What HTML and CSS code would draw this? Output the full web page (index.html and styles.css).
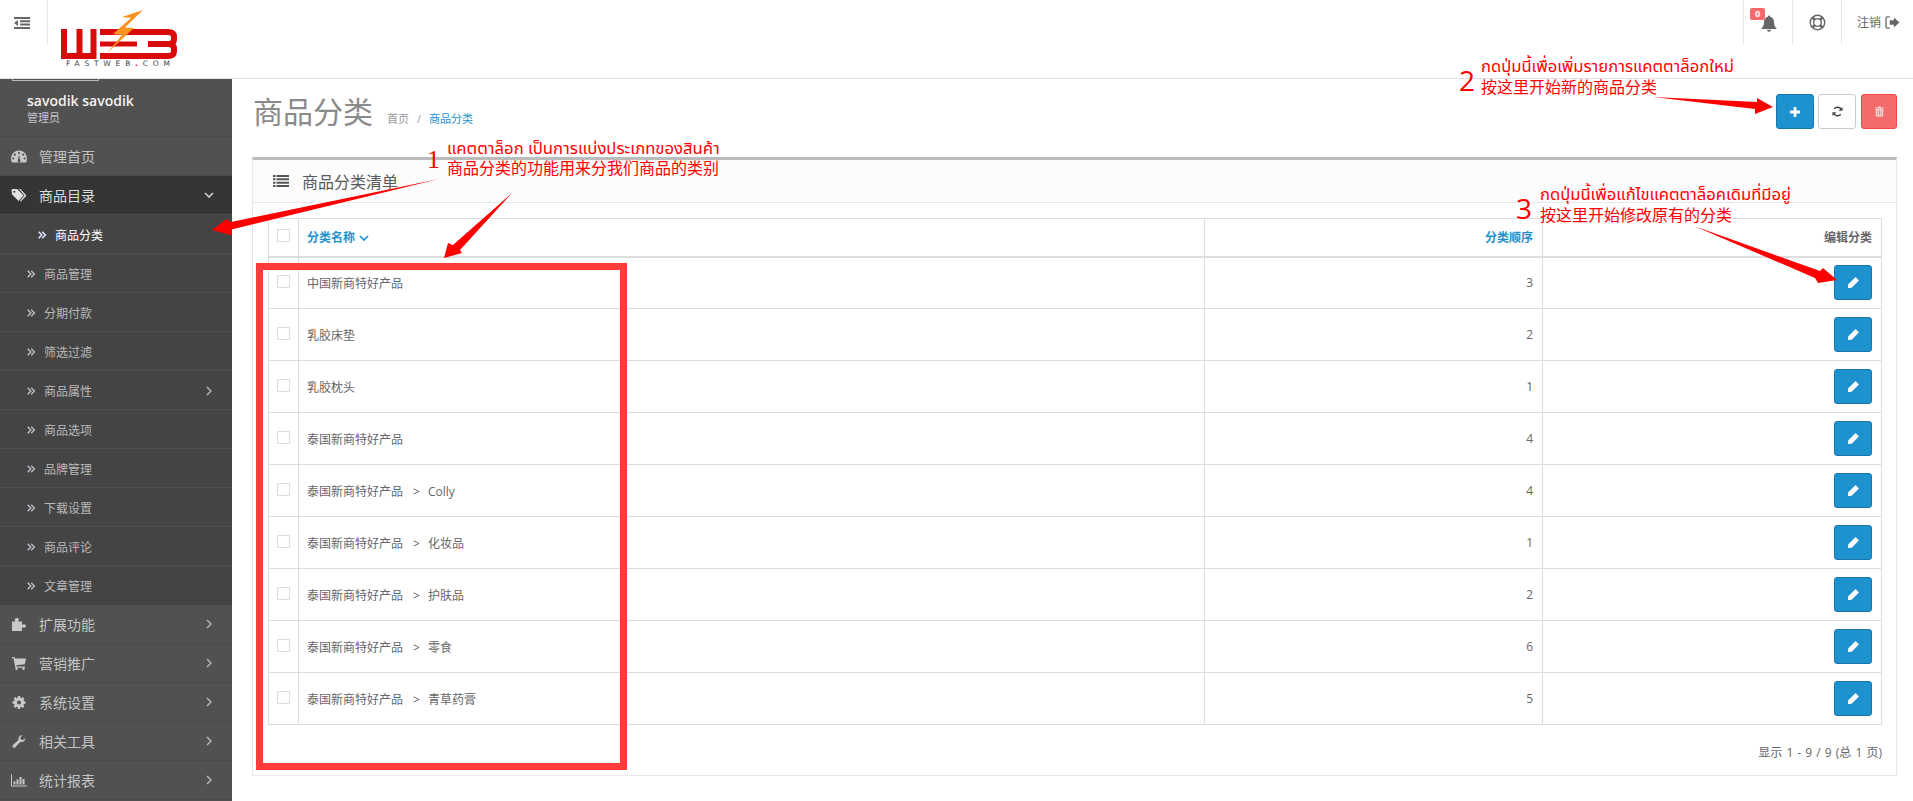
FILE: index.html
```html
<!DOCTYPE html>
<html lang="zh">
<head>
<meta charset="utf-8">
<title>商品分类</title>
<link rel="stylesheet" href="styles.css">
</head>
<body>
<svg class="defs" xmlns="http://www.w3.org/2000/svg">
  <symbol id="i-indent" viewBox="0 0 16 12"><path d="M0 0h16v2H0zM6 3.3h10v2H6zM6 6.6h10v2H6zM0 10h16v2H0zM0 6l4-3v6z"/></symbol>
  <symbol id="i-bell" viewBox="0 0 16 16"><path d="M8 0a1.2 1.2 0 0 1 1.2 1.3C11.8 1.9 13 4 13 6.500c0 3.500 1 4.700 2.500 6.300v.7H.5v-.7C2 11.200 3 10 3 6.500 3 4 4.200 1.900 6.800 1.300A1.200 1.200 0 0 1 8 0zM6 14.200h4a2 2 0 0 1-4 0z"/></symbol>
  <symbol id="i-ring" viewBox="0 0 16 16"><circle cx="8" cy="8" r="6.800" fill="none" stroke="currentColor" stroke-width="1.300"/><circle cx="8" cy="8" r="3.600" fill="none" stroke="currentColor" stroke-width="1.300"/><path d="M3 3l2.800 2.800M13 3l-2.800 2.800M3 13l2.800-2.800M13 13l-2.800-2.800" stroke="currentColor" stroke-width="2.400"/></symbol>
  <symbol id="i-out" viewBox="0 0 16 14"><path d="M5 1H2.500A1.500 1.500 0 0 0 1 2.500v9A1.500 1.500 0 0 0 2.500 13H5" fill="none" stroke="currentColor" stroke-width="1.400"/><path d="M9.500 1.500L15.500 7l-6 5.500V9.500H5v-5h4.500z"/></symbol>
  <symbol id="i-dash" viewBox="0 0 16 12"><path d="M8 0a8 8 0 0 1 8 8c0 1.500-.4 2.900-1 4H1C.4 10.900 0 9.500 0 8a8 8 0 0 1 8-8z"/><g fill="#515151"><circle cx="8" cy="2.500" r="1.100"/><circle cx="3.800" cy="4.200" r="1.100"/><circle cx="12.200" cy="4.200" r="1.100"/><circle cx="2.300" cy="8" r="1.100"/><circle cx="13.700" cy="8" r="1.100"/><path d="M7.100 9.500l1-5.500 1 5.500a1.400 1.400 0 1 1-2 0z"/></g></symbol>
  <symbol id="i-tag" viewBox="0 0 16 14"><path d="M0 1.500A1.500 1.500 0 0 1 1.500 0H6l7 7-5.500 6L.5 6z"/><circle cx="3" cy="3" r="1.100" fill="#353535"/><path d="M8 0h1.500l6 6.500a1 1 0 0 1 0 1.300L10 13.500 9 12.800 14 7z"/></symbol>
  <symbol id="i-dbl" viewBox="0 0 9 8"><path d="M.7.7L3.800 4 .7 7.300M4.200.7L7.400 4 4.200 7.300" fill="none" stroke="currentColor" stroke-width="1.500"/></symbol>
  <symbol id="i-right" viewBox="0 0 6 10"><path d="M1 1l4 4-4 4" fill="none" stroke="currentColor" stroke-width="1.500"/></symbol>
  <symbol id="i-down" viewBox="0 0 10 6"><path d="M1 1l4 4 4-4" fill="none" stroke="currentColor" stroke-width="1.700"/></symbol>
  <symbol id="i-puzzle" viewBox="0 0 14 13"><path d="M0 3.500h3.500C3 2.500 2.800 2 2.800 1.500 2.800.5 3.800 0 4.800 0s2 .5 2 1.500c0 .5-.2 1-.7 2H10V7c1-.5 1.500-.7 2-.7 1 0 2 .7 2 1.700s-1 1.700-2 1.700c-.5 0-1-.2-2-.7V13H0z"/></symbol>
  <symbol id="i-cart" viewBox="0 0 14 13"><path d="M0 0h2.500l.4 1.500H14l-1.200 5.800-8.500 1 .3 1.200h8.400v1.200H3.300L1.500 1.200H0z"/><circle cx="4.500" cy="11.800" r="1.200"/><circle cx="11.500" cy="11.800" r="1.200"/></symbol>
  <symbol id="i-cog" viewBox="0 0 14 14"><path fill-rule="evenodd" d="M5.800 0h2.400l.3 1.900 1 .4L11.100 1.200l1.700 1.700-1.100 1.600.4 1 1.900.3v2.400l-1.900.3-.4 1 1.100 1.600-1.700 1.700-1.600-1.100-1 .4-.3 1.900H5.800l-.3-1.900-1-.4-1.600 1.100-1.700-1.700 1.100-1.600-.4-1L0 8.200V5.800l1.900-.3.4-1-1.100-1.600 1.700-1.700 1.600 1.100 1-.4zM7 4.800a2.200 2.200 0 1 0 0 4.400 2.200 2.200 0 0 0 0-4.400z"/></symbol>
  <symbol id="i-wrench" viewBox="0 0 14 14"><path d="M13.800 3.200A4 4 0 0 1 8.500 7.300L3 13.300a1.800 1.800 0 0 1-2.500 0 1.800 1.800 0 0 1 0-2.500L6.500 5.300A4 4 0 0 1 10.800.2L8.400 2.600l.6 2.200 2.200.7z"/></symbol>
  <symbol id="i-chart" viewBox="0 0 16 12"><path d="M0 0h1v11h15v1H0zM2.500 7h2v3h-2zM5.500 5h2v5h-2zM8.500 2.500h2V10h-2zM11.500 4.500h2V10h-2z"/></symbol>
  <symbol id="i-list" viewBox="0 0 16 12"><path d="M0 0h2.500v2H0zM3.500 0H16v2H3.500zM0 3.300h2.500v2H0zM3.500 3.300H16v2H3.500zM0 6.700h2.500v2H0zM3.500 6.700H16v2H3.500zM0 10h2.500v2H0zM3.500 10H16v2H3.500z"/></symbol>
  <symbol id="i-plus" viewBox="0 0 10 10"><path d="M3.600 0h2.800v3.600H10v2.800H6.400V10H3.600V6.400H0V3.600h3.600z"/></symbol>
  <symbol id="i-refresh" viewBox="0 0 12 12"><path d="M10.300 4.500A4.600 4.600 0 0 0 2.400 3" fill="none" stroke="currentColor" stroke-width="1.700"/><path d="M11.500 1v4.300H7.200z"/><path d="M1.700 7.500A4.600 4.600 0 0 0 9.600 9" fill="none" stroke="currentColor" stroke-width="1.700"/><path d="M.5 11V6.700h4.300z"/></symbol>
  <symbol id="i-trash" viewBox="0 0 11 12"><path fill-rule="evenodd" d="M3.500 1L4 0h3l.5 1H11v1.200H0V1zM1 3h9v8a1 1 0 0 1-1 1H2a1 1 0 0 1-1-1zM3 4.200v6.300h.9V4.200zM5 4.200v6.300h.9V4.200zM7.100 4.200v6.300H8V4.200z"/></symbol>
  <symbol id="i-pencil" viewBox="0 0 12 12"><path d="M8.800.6l2.600 2.600a.8.800 0 0 1 0 1.100L4 11.700 0 12l.3-4L7.700.6a.8.800 0 0 1 1.100 0z"/></symbol>
</svg>

<div class="page">
  <header class="topbar">
    <div class="toggle"><svg class="ico ico-indent"><use href="#i-indent"/></svg></div>
    <div class="brand">
      <svg class="logo" viewBox="0 0 120 64" xmlns="http://www.w3.org/2000/svg">
        <g fill="none" stroke="#d80a0a" stroke-width="6">
          <path d="M4 24v27h29.500V24M19.500 24v25"/>
          <path d="M40 27h37M40 51h37"/>
          <path d="M40 39h37" stroke-width="5"/>
          <path d="M77 27h31q6 0 6 5v2q0 5-6 5H88h20q6 0 6 5v2q0 5-6 5H77"/>
        </g>
        <path d="M83 5L62 12l9 1L53 29l9 1L47 48 74 23l-9-.5z" fill="#f7931e"/>
        <text class="logo-text" x="6" y="61" textLength="104">FASTWEB<tspan class="logo-dot">.</tspan>COM</text>
      </svg>
    </div>
    <nav class="top-actions">
      <a class="top-act"><span class="badge">0</span><svg class="ico ico-bell"><use href="#i-bell"/></svg></a>
      <a class="top-act"><svg class="ico ico-ring"><use href="#i-ring"/></svg></a>
      <a class="top-act top-out">注销 <svg class="ico ico-out"><use href="#i-out"/></svg></a>
    </nav>
  </header>

  <div class="layout">
    <aside class="sidebar">
      <div class="profile">
        <div class="avatar-edge"></div>
        <div class="user-name">savodik savodik</div>
        <div class="user-role">管理员</div>
      </div>
      <ul class="menu">
        <li class="item"><svg class="ico m-ico"><use href="#i-dash"/></svg><span>管理首页</span></li>
        <li class="item item-open"><svg class="ico m-ico m-ico-tag"><use href="#i-tag"/></svg><span>商品目录</span><svg class="ico caret-down"><use href="#i-down"/></svg></li>
        <li class="sub sub-active"><svg class="ico dbl"><use href="#i-dbl"/></svg><span>商品分类</span></li>
        <li class="sub"><svg class="ico dbl"><use href="#i-dbl"/></svg><span>商品管理</span></li>
        <li class="sub"><svg class="ico dbl"><use href="#i-dbl"/></svg><span>分期付款</span></li>
        <li class="sub"><svg class="ico dbl"><use href="#i-dbl"/></svg><span>筛选过滤</span></li>
        <li class="sub"><svg class="ico dbl"><use href="#i-dbl"/></svg><span>商品属性</span><svg class="ico caret"><use href="#i-right"/></svg></li>
        <li class="sub"><svg class="ico dbl"><use href="#i-dbl"/></svg><span>商品选项</span></li>
        <li class="sub"><svg class="ico dbl"><use href="#i-dbl"/></svg><span>品牌管理</span></li>
        <li class="sub"><svg class="ico dbl"><use href="#i-dbl"/></svg><span>下载设置</span></li>
        <li class="sub"><svg class="ico dbl"><use href="#i-dbl"/></svg><span>商品评论</span></li>
        <li class="sub"><svg class="ico dbl"><use href="#i-dbl"/></svg><span>文章管理</span></li>
        <li class="item"><svg class="ico m-ico"><use href="#i-puzzle"/></svg><span>扩展功能</span><svg class="ico caret"><use href="#i-right"/></svg></li>
        <li class="item"><svg class="ico m-ico"><use href="#i-cart"/></svg><span>营销推广</span><svg class="ico caret"><use href="#i-right"/></svg></li>
        <li class="item"><svg class="ico m-ico"><use href="#i-cog"/></svg><span>系统设置</span><svg class="ico caret"><use href="#i-right"/></svg></li>
        <li class="item"><svg class="ico m-ico"><use href="#i-wrench"/></svg><span>相关工具</span><svg class="ico caret"><use href="#i-right"/></svg></li>
        <li class="item"><svg class="ico m-ico"><use href="#i-chart"/></svg><span>统计报表</span><svg class="ico caret"><use href="#i-right"/></svg></li>
      </ul>
    </aside>

    <main class="content">
      <div class="page-head">
        <div class="title-wrap">
          <h1 class="title">商品分类</h1>
          <div class="crumbs"><span class="crumb-home">首页</span><span class="crumb-sep">/</span><span class="crumb-here">商品分类</span></div>
        </div>
        <div class="head-btns">
          <button class="btn btn-primary btn-add"><svg class="ico ico-plus"><use href="#i-plus"/></svg></button>
          <button class="btn btn-default"><svg class="ico ico-refresh"><use href="#i-refresh"/></svg></button>
          <button class="btn btn-danger"><svg class="ico ico-trash"><use href="#i-trash"/></svg></button>
        </div>
      </div>

      <section class="panel">
        <div class="panel-head"><svg class="ico ico-list"><use href="#i-list"/></svg><span>商品分类清单</span></div>
        <div class="panel-body">
          <table class="grid">
            <colgroup><col class="c-check"><col class="c-name"><col class="c-order"><col class="c-edit"></colgroup>
            <thead>
              <tr>
                <th><span class="check"></span></th>
                <th class="th-link">分类名称 <svg class="ico ico-sort"><use href="#i-down"/></svg></th>
                <th class="num th-link">分类顺序</th>
                <th class="num">编辑分类</th>
              </tr>
            </thead>
            <tbody>
              <tr><td><span class="check"></span></td><td>中国新商特好产品</td><td class="num">3</td><td class="num"><button class="btn-edit"><svg class="ico ico-pencil"><use href="#i-pencil"/></svg></button></td></tr>
              <tr><td><span class="check"></span></td><td>乳胶床垫</td><td class="num">2</td><td class="num"><button class="btn-edit"><svg class="ico ico-pencil"><use href="#i-pencil"/></svg></button></td></tr>
              <tr><td><span class="check"></span></td><td>乳胶枕头</td><td class="num">1</td><td class="num"><button class="btn-edit"><svg class="ico ico-pencil"><use href="#i-pencil"/></svg></button></td></tr>
              <tr><td><span class="check"></span></td><td>泰国新商特好产品</td><td class="num">4</td><td class="num"><button class="btn-edit"><svg class="ico ico-pencil"><use href="#i-pencil"/></svg></button></td></tr>
              <tr><td><span class="check"></span></td><td>泰国新商特好产品<span class="sep">&gt;</span>Colly</td><td class="num">4</td><td class="num"><button class="btn-edit"><svg class="ico ico-pencil"><use href="#i-pencil"/></svg></button></td></tr>
              <tr><td><span class="check"></span></td><td>泰国新商特好产品<span class="sep">&gt;</span>化妆品</td><td class="num">1</td><td class="num"><button class="btn-edit"><svg class="ico ico-pencil"><use href="#i-pencil"/></svg></button></td></tr>
              <tr><td><span class="check"></span></td><td>泰国新商特好产品<span class="sep">&gt;</span>护肤品</td><td class="num">2</td><td class="num"><button class="btn-edit"><svg class="ico ico-pencil"><use href="#i-pencil"/></svg></button></td></tr>
              <tr><td><span class="check"></span></td><td>泰国新商特好产品<span class="sep">&gt;</span>零食</td><td class="num">6</td><td class="num"><button class="btn-edit"><svg class="ico ico-pencil"><use href="#i-pencil"/></svg></button></td></tr>
              <tr><td><span class="check"></span></td><td>泰国新商特好产品<span class="sep">&gt;</span>青草药膏</td><td class="num">5</td><td class="num"><button class="btn-edit"><svg class="ico ico-pencil"><use href="#i-pencil"/></svg></button></td></tr>
            </tbody>
          </table>
          <div class="pager">显示 1 - 9 / 9 (总 1 页)</div>
        </div>
      </section>
    </main>
  </div>

  <svg class="marks" viewBox="0 0 1913 801" xmlns="http://www.w3.org/2000/svg">
    <rect class="mark-box" x="259.500" y="266.500" width="364" height="500"/>
    <path class="mark-arrow" d="M439 179L231 222 226 219.500 212 230 232 235.500 231.500 229.500z"/>
    <path class="mark-arrow" d="M512 193L460 250 462 253 444 258 448 243 453 245z"/>
    <path class="mark-arrow" d="M1653 97L1757 102 1757 98 1773 107 1755 114 1755 109z"/>
    <path class="mark-arrow" d="M1694 226L1820 271 1823 268 1837 280 1818 283 1815 278z"/>
  </svg>

  <div class="note note-1"><span class="note-num note-serif">1</span><div class="note-lines note-tight"><span class="thai thai-big">แคตตาล็อก เป็นการแบ่งประเภทของสินค้า</span><br>商品分类的功能用来分我们商品的类别</div></div>
  <div class="note note-2"><span class="note-num">2</span><div class="note-lines"><span class="thai">กดปุ่มนี้เพื่อเพิ่มรายการแคตตาล็อกใหม่</span><br>按这里开始新的商品分类</div></div>
  <div class="note note-3"><span class="note-num">3</span><div class="note-lines"><span class="thai">กดปุ่มนี้เพื่อแก้ไขแคตตาล็อคเดิมที่มีอยู่</span><br>按这里开始修改原有的分类</div></div>
</div>
</body>
</html>
```
FILE: styles.css
```css
* { box-sizing: border-box; }
html, body { margin: 0; padding: 0; height: 100%; overflow: hidden; background: #fff; }
body { font-family: "Open Sans", "Noto Sans CJK SC", "Noto Sans Thai", "DejaVu Sans", sans-serif; font-size: 12px; color: #666; }
.defs { display: none; }
.ico { display: block; fill: currentColor; flex: none; }
.page { position: relative; width: 1913px; height: 801px; overflow: hidden; display: flex; flex-direction: column; }

/* top bar */
.topbar { height: 79px; flex: none; display: flex; border-bottom: 1px solid #e1e1e1; background: #fff; }
.toggle { width: 48px; height: 44px; border-right: 1px solid #e6e6e6; display: flex; padding: 17px 0 0 14px; color: #666; }
.ico-indent { width: 16px; height: 12px; }
.brand { width: 140px; padding: 5px 0 0 12px; }
.logo { width: 120px; height: 64px; display: block; overflow: visible; }
.logo-text { font-family: "DejaVu Sans", sans-serif; font-size: 7.500px; fill: #444; }
.logo-dot { fill: #d80a0a; font-weight: 700; }
.top-actions { margin-left: auto; display: flex; height: 44px; }
.top-act { position: relative; width: 49px; border-left: 1px solid #e6e6e6; display: flex; align-items: center; justify-content: center; color: #666; }
.top-out { width: 72px; gap: 4px; font-size: 12px; justify-content: flex-start; padding-left: 15px; white-space: nowrap; }
.ico-bell { width: 16px; height: 17px; margin: 3px 0 0 1px; }
.ico-ring { width: 17px; height: 17px; }
.ico-out { width: 15px; height: 13px; }
.badge { position: absolute; z-index: 1; left: 6px; top: 8px; width: 15px; height: 12px; border-radius: 2px; background: #f56b6b; color: #fff; font-size: 9px; line-height: 12px; font-weight: 700; text-align: center; }

/* sidebar */
.layout { flex: 1; display: flex; min-height: 0; }
.sidebar { width: 232px; flex: none; background: #515151; color: #c4c4c4; }
.profile { height: 58px; border-bottom: 1px solid #494949; }
.avatar-edge { width: 87px; height: 2px; margin-left: 12px; border: 1px solid #bbb; border-top: 0; }
.user-name { margin: 10px 0 0 27px; font-size: 14px; line-height: 19px; font-weight: 600; color: #f2f2f2; }
.user-role { margin: 0 0 0 27px; font-size: 11px; line-height: 16px; color: #c4c4c4; }
.menu { list-style: none; margin: 0; padding: 0; }
.item { height: 39px; display: flex; align-items: center; padding-left: 11px; font-size: 14px; border-bottom: 1px solid #494949; }
.item-open { background: #353535; color: #ddd; border-bottom-color: #4d4d4d; }
.m-ico { width: 16px; height: 13px; margin-right: 12px; color: #c9c9c9; }
.m-ico-tag { color: #e2e2e2; }
.caret { width: 6px; height: 10px; margin-left: auto; margin-right: 20px; color: #b5b5b5; }
.caret-down { width: 10px; height: 6px; margin-left: auto; margin-right: 18px; color: #c9c9c9; }
.sub { height: 39px; display: flex; align-items: center; padding: 2px 0 0 27px; font-size: 12px; background: #444; border-bottom: 1px solid #4e4e4e; color: #b9b9b9; }
.sub:nth-child(12) { border-bottom-color: #444; }
.dbl { width: 9px; height: 8px; margin-right: 8px; color: #b9b9c4; }
.sub-active { color: #fff; padding-left: 38px; }
.sub-active .dbl { color: #e4e8ff; }

/* content */
.content { flex: 1; min-width: 0; padding: 15px 16px 0 20px; }
.page-head { display: flex; justify-content: space-between; height: 63px; }
.title-wrap { display: flex; align-items: flex-start; }
.title { margin: 0 0 0 1px; font-size: 30px; line-height: 36px; font-weight: 400; color: #8a8a8a; }
.crumbs { margin: 17px 0 0 14px; font-size: 11px; line-height: 16px; display: flex; gap: 8px; }
.crumb-home, .crumb-sep { color: #999; }
.crumb-here { color: #1e91cf; }
.head-btns { display: flex; gap: 4px; }
.btn { width: 38px; height: 35px; padding: 0; border: 1px solid; border-radius: 3px; display: flex; align-items: center; justify-content: center; }
.btn-primary { background: #1e91cf; border-color: #1978ab; color: #fff; }
.btn-default { background: #fff; border-color: #ccc; color: #444; }
.btn-danger { width: 36px; margin-left: 1px; background: #f56b6b; border-color: #f24545; color: #fff; }
.ico-plus { width: 10px; height: 10px; }
.ico-refresh { width: 11px; height: 11px; }
.ico-trash { width: 9px; height: 11px; color: #fbdcdc; }

.panel { height: 619px; border: 1px solid #e8e8e8; border-top: 3px solid #bbb; }
.panel-head { height: 43px; background: #fcfcfc; border-bottom: 1px solid #e8e8e8; display: flex; align-items: center; padding-left: 20px; font-size: 16px; color: #595959; gap: 13px; }
.ico-list { width: 16px; height: 12px; color: #555; }
.panel-body { padding: 15px 14px 0 15px; }
.grid { width: 100%; border-collapse: collapse; table-layout: fixed; }
.c-check { width: 30px; }
.c-order { width: 338px; }
.c-edit { width: 339px; }
.grid th, .grid td { border: 1px solid #ddd; padding: 0 9px; vertical-align: middle; text-align: left; }
.grid th { height: 38px; font-weight: 700; border-bottom-width: 2px; color: #666; }
.grid td { height: 52px; }
.grid th:first-child, .grid td:first-child { padding: 0; }
.grid th:nth-child(2), .grid td:nth-child(2) { padding-left: 8px; }
.th-link { color: #1e91cf !important; }
.num { text-align: right !important; }
.check { display: block; width: 13px; height: 13px; margin: 0 0 4px 8px; border: 1px solid #ddd; }
.grid td .check { margin-bottom: 2px; }
.sep { margin: 0 8px 0 10px; }
.ico-sort { display: inline-block; width: 10px; height: 6px; margin-left: 1px; vertical-align: 1px; }
.btn-edit { width: 38px; height: 35px; padding: 0; border: 1px solid #1978ab; border-radius: 3px; background: #1e91cf; color: #fff; display: inline-flex; align-items: center; justify-content: center; vertical-align: middle; }
.ico-pencil { width: 11px; height: 11px; }
.pager { margin-top: 19px; text-align: right; line-height: 18px; word-spacing: 1px; }

/* annotations lying over the page */
.marks { position: absolute; left: 0; top: 0; width: 1913px; height: 801px; pointer-events: none; }
.mark-box { fill: none; stroke: #ff3b3b; stroke-width: 7; }
.mark-arrow { fill: #f00; }
.note { position: absolute; display: flex; color: #f00; }
.note-lines { font-size: 16px; line-height: 21px; white-space: nowrap; }
.note-tight { line-height: 20px; }
.thai { font-size: 16.600px; }
.thai-big { font-size: 16.700px; }
.note-num { font-size: 28px; line-height: 28px; width: 22px; margin-top: 11px; }
.note-serif { font-family: "Liberation Serif", serif; font-size: 26px; width: 20px; margin-top: 8px; }
.note-1 { left: 427px; top: 138px; }
.note-2 { left: 1459px; top: 55px; }
.note-3 { left: 1516px; top: 183px; }
.note-3 .note-num { width: 24px; }
```
